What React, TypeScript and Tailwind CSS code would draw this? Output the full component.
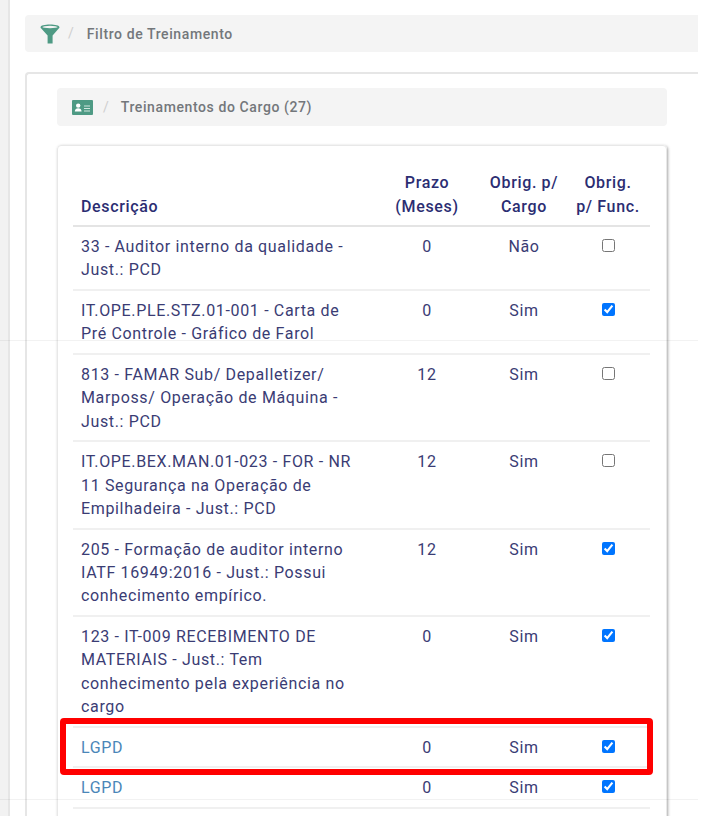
import React from 'react';

type Row = {
  id: number;
  desc: string;
  prazo: number;
  cargo: string;
  func: boolean;
  link?: boolean;
};

const rows: Row[] = [
  { id: 1, desc: '33 - Auditor interno da qualidade - Just.: PCD', prazo: 0, cargo: 'Não', func: false },
  { id: 2, desc: 'IT.OPE.PLE.STZ.01-001 - Carta de Pré Controle - Gráfico de Farol', prazo: 0, cargo: 'Sim', func: true },
  { id: 3, desc: '813 - FAMAR Sub/ Depalletizer/ Marposs/ Operação de Máquina - Just.: PCD', prazo: 12, cargo: 'Sim', func: false },
  { id: 4, desc: 'IT.OPE.BEX.MAN.01-023 - FOR - NR 11 Segurança na Operação de Empilhadeira - Just.: PCD', prazo: 12, cargo: 'Sim', func: false },
  { id: 5, desc: '205 - Formação de auditor interno IATF 16949:2016 - Just.: Possui conhecimento empírico.', prazo: 12, cargo: 'Sim', func: true },
  { id: 6, desc: '123 - IT-009 RECEBIMENTO DE MATERIAIS - Just.: Tem conhecimento pela experiência no cargo', prazo: 0, cargo: 'Sim', func: true },
  { id: 7, desc: 'LGPD', prazo: 0, cargo: 'Sim', func: true, link: true },
  { id: 8, desc: 'LGPD', prazo: 0, cargo: 'Sim', func: true, link: true },
];

function FunnelIcon() {
  return (
    <svg width="20" height="20" viewBox="0 0 20 20" className="shrink-0">
      <path d="M0.5 3.2C0.5 1.4 4.8 0.4 10 0.4s9.5 1 9.5 2.8c0 .6-.4 1.1-1 1.6L12.6 11.6V19.4H7.6V11.6L1.5 4.8C.9 4.3.5 3.8.5 3.2Z" fill="#4e9a84" />
      <ellipse cx="10" cy="3" rx="7.6" ry="1.2" fill="#f4f4f4" />
    </svg>
  );
}

function CardIcon() {
  return (
    <svg width="21" height="15" viewBox="0 0 21 15" className="shrink-0">
      <rect x="0" y="0" width="21" height="15" rx="1" fill="#4e9a84" />
      <circle cx="6.2" cy="5.6" r="2.2" fill="#fff" />
      <path d="M2.8 11.6c0-2.2 1.5-3.4 3.4-3.4s3.4 1.2 3.4 3.4Z" fill="#fff" />
      <path d="M12 6h6M12 8.5h6M12 11h6" stroke="#cfe5de" strokeWidth="1.1" />
    </svg>
  );
}

export default function App() {
  return (
    <div className="relative flex h-[816px] w-[711px] overflow-hidden bg-white font-['Roboto',sans-serif]">
      {/* faixa lateral */}
      <div className="w-[10px] shrink-0 border-r-2 border-[#e6e6e6] bg-[#f2f2f2]" />

      <div className="ml-[15px] w-[673px] shrink-0 pt-[15px]">
        <div className="flex h-[37px] items-center rounded-l bg-[#f4f4f4] pl-[15px]">
          <FunnelIcon />
          <span className="ml-[8px] text-[14px] text-[#cfcfcf]">/</span>
          <span className="ml-[13px] pt-px text-[14px] font-medium tracking-[0.6px] text-[#73777b]">Filtro de Treinamento</span>
        </div>

        <div className="mt-[20px] h-[760px] rounded-tl border-l-2 border-t-2 border-[#e6e6e6] pl-[30px] pr-[31px] pt-[14px]">
          <div className="flex h-[38px] items-center rounded bg-[#f4f4f4] pl-[15px]">
            <CardIcon />
            <span className="ml-[10px] text-[14px] text-[#cfcfcf]">/</span>
            <span className="ml-[12px] text-[14px] font-medium tracking-[0.6px] text-[#73777b]">Treinamentos do Cargo (27)</span>
          </div>

          <div className="mt-[19px] rounded border border-[#e8e8e8] pb-10 pl-[15px] pr-4 pt-[16px] shadow-[1px_1px_3px_rgba(0,0,0,0.35)]">
            <table className="w-[577px] table-fixed border-collapse text-[16px] leading-[23.45px] tracking-[0.65px] text-[#3a3c74]">
              <colgroup>
                <col className="w-[299px]" />
                <col className="w-[110px]" />
                <col className="w-[84px]" />
                <col className="w-[84px]" />
              </colgroup>
              <thead>
                <tr className="h-[64px] border-b-2 border-[#e4e4e4] align-bottom text-[#2b2d72]">
                  <th className="px-2 pb-[7px] text-left font-medium">Descrição</th>
                  <th className="px-2 pb-[7px] text-center font-medium">
                    Prazo
                    <br />
                    (Meses)
                  </th>
                  <th className="px-1 pb-[7px] text-center font-medium">
                    Obrig. p/
                    <br />
                    Cargo
                  </th>
                  <th className="px-1 pb-[7px] text-center font-medium">
                    Obrig.
                    <br />
                    p/ Func.
                  </th>
                </tr>
              </thead>
              <tbody>
                {rows.map((row) => (
                  <tr key={row.id} className="border-b-2 border-[#f0f0f0] align-top">
                    <td className={`pb-[7px] pl-2 pr-4 pt-2 ${row.link ? 'text-[#4a86b8]' : ''}`}>{row.desc}</td>
                    <td className="pb-[7px] pt-2 text-center">{row.prazo}</td>
                    <td className="pb-[7px] pt-2 text-center">{row.cargo}</td>
                    <td className="pb-[7px] pt-2 text-center">
                      <input type="checkbox" defaultChecked={row.func} className="mx-auto mt-[4px] block h-[13px] w-[13px]" />
                    </td>
                  </tr>
                ))}
              </tbody>
            </table>
          </div>
        </div>
      </div>

      {/* destaque vermelho sobre a linha LGPD */}
      <div className="pointer-events-none absolute left-[60px] top-[718px] h-[57px] w-[593px] rounded border-[6px] border-[#ff0000]" />

      {/* emendas do print */}
      <div className="pointer-events-none absolute left-0 top-[340px] h-px w-[698px] bg-black/5" />
      <div className="pointer-events-none absolute left-0 top-[799px] h-px w-[698px] bg-black/5" />
    </div>
  );
}
